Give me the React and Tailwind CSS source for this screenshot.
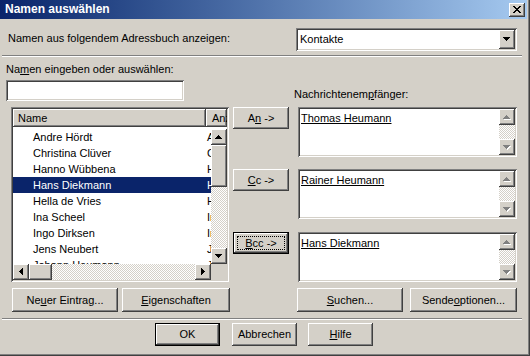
import React from 'react';

const raised =
  'bg-[#d4d0c8] shadow-[inset_-1px_-1px_#404040,inset_1px_1px_#ffffff,inset_-2px_-2px_#808080,inset_2px_2px_#d4d0c8]';
const sunken =
  'bg-white shadow-[inset_1px_1px_#808080,inset_-1px_-1px_#ffffff,inset_2px_2px_#404040,inset_-2px_-2px_#d4d0c8]';
const dither = 'bg-[repeating-conic-gradient(#ffffff_0%_25%,#d4d0c8_0%_50%)] bg-[length:2px_2px]';

const ARROWS = {
  up: { w: 7, h: 4, d: 'M3 0h1v1h-1zM2 1h3v1h-3zM1 2h5v1h-5zM0 3h7v1h-7z' },
  down: { w: 7, h: 4, d: 'M0 0h7v1h-7zM1 1h5v1h-5zM2 2h3v1h-3zM3 3h1v1h-1z' },
  left: { w: 4, h: 7, d: 'M3 0h1v7h-1zM2 1h1v5h-1zM1 2h1v3h-1zM0 3h1v1h-1z' },
  right: { w: 4, h: 7, d: 'M0 0h1v7h-1zM1 1h1v5h-1zM2 2h1v3h-1zM3 3h1v1h-1z' },
};

const Arrow = ({ dir, disabled }) => {
  const a = ARROWS[dir];
  return (
    <svg width={a.w + 1} height={a.h + 1} viewBox={`0 0 ${a.w + 1} ${a.h + 1}`} shapeRendering="crispEdges">
      {disabled && <path d={a.d} fill="#ffffff" transform="translate(1 1)" />}
      <path d={a.d} fill={disabled ? '#808080' : '#000000'} />
    </svg>
  );
};

const ScrollBtn = ({ dir, disabled }) => (
  <div className={`${raised} w-[16px] h-[16px] shrink-0 flex items-center justify-center`}>
    <Arrow dir={dir} disabled={disabled} />
  </div>
);

const Button = ({ children, className = '', isDefault, focused }) => (
  <div className={`${className} ${isDefault ? 'border border-black' : ''} shrink-0 flex`}>
    <div className={`${raised} flex-1 flex items-center justify-center p-[3px]`}>
      <div
        className={`flex-1 self-stretch flex items-center justify-center ${
          focused ? 'outline outline-1 outline-dotted outline-black -outline-offset-1' : ''
        }`}
      >
        {children}
      </div>
    </div>
  </div>
);

const RecipientBox = ({ name, className = '' }) => (
  <div className={`${sunken} ${className} w-[219px] h-[50px] flex p-[2px]`}>
    <div className="flex-1 pl-[1px] pt-[3px]">
      <span className="underline">{name}</span>
    </div>
    <div className="w-[16px] flex flex-col">
      <ScrollBtn dir="up" disabled />
      <div className={`flex-1 ${dither}`} />
      <ScrollBtn dir="down" disabled />
    </div>
  </div>
);

const contacts = [
  'Andre Hördt',
  'Christina Clüver',
  'Hanno Wübbena',
  'Hans Diekmann',
  'Hella de Vries',
  'Ina Scheel',
  'Ingo Dirksen',
  'Jens Neubert',
  'Johann Heumann',
];

const ContactList = () => (
  <div className={`${sunken} ml-[5px] mt-[6px] w-[218px] h-[175px] p-[2px] flex flex-col`}>
    <div className="h-[18px] flex shrink-0 overflow-hidden">
      <div className={`${raised} w-[193px] shrink-0 flex items-center pl-[5px]`}>Name</div>
      <div className={`${raised} w-[21px] shrink-0 flex items-center pl-[6px] overflow-hidden whitespace-nowrap`}>
        Anzeigename
      </div>
    </div>
    <div className="flex-1 flex overflow-hidden">
      <div className="w-[198px] pt-[2px] overflow-hidden">
        {contacts.map((c) => {
          const sel = c === 'Hans Diekmann';
          return (
            <div key={c} className={`h-[16px] flex items-center ${sel ? 'bg-[#0a246a] text-white' : ''}`}>
              <div className="w-[193px] pl-[20px] shrink-0 whitespace-nowrap">{c}</div>
              <div className="w-[5px] pl-[1px] overflow-hidden whitespace-nowrap">{c}</div>
            </div>
          );
        })}
      </div>
      <div className="w-[16px] flex flex-col pt-[2px]">
        <ScrollBtn dir="up" />
        <div className={`${raised} h-[42px] shrink-0`} />
        <div className={`flex-1 ${dither}`} />
        <ScrollBtn dir="down" />
      </div>
    </div>
    <div className="h-[16px] flex shrink-0">
      <div className="w-[198px] flex">
        <ScrollBtn dir="left" />
        <div className={`${raised} w-[23px] shrink-0`} />
        <div className={`flex-1 ${dither}`} />
        <ScrollBtn dir="right" />
      </div>
      <div className="w-[16px] bg-[#d4d0c8]" />
    </div>
  </div>
);

export default function App() {
  return (
    <div className="w-[530px] h-[356px] bg-[#d4d0c8] overflow-hidden flex flex-col text-[11px] leading-[13px] text-black font-['Liberation_Sans',Arial,sans-serif] shadow-[inset_-1px_-1px_#404040,inset_-2px_-2px_#808080]">
      {/* title bar */}
      <div className="h-[19px] w-[527px] shrink-0 flex items-center pl-[5px] bg-linear-to-r from-[#0a246a] to-[#a6caf0]">
        <span className="text-white font-bold text-[12px]">Namen auswählen</span>
        <div className={`${raised} ml-auto mr-[2px] w-[16px] h-[14px] flex items-center justify-center`}>
          <svg width="8" height="7" viewBox="0 0 8 7" shapeRendering="crispEdges">
            <path
              d="M0 0h2v1h-2zM6 0h2v1h-2zM1 1h2v1h-2zM5 1h2v1h-2zM2 2h4v1h-4zM3 3h2v1h-2zM2 4h4v1h-4zM1 5h2v1h-2zM5 5h2v1h-2zM0 6h2v1h-2zM6 6h2v1h-2z"
              fill="#000"
            />
          </svg>
        </div>
      </div>

      {/* address book row */}
      <div className="mt-[9px] h-[23px] flex items-center shrink-0">
        <span className="pl-[8px] pb-[2px]">Namen aus folgendem Adressbuch anzeigen:</span>
        <div className={`${sunken} ml-auto mr-[13px] w-[221px] h-[23px] flex items-center p-[2px]`}>
          <span className="flex-1 pl-[2px]">Kontakte</span>
          <div className={`${raised} w-[16px] h-[19px] flex items-center justify-center`}>
            <Arrow dir="down" />
          </div>
        </div>
      </div>

      <div className="mt-[4px] ml-[2px] mr-[8px] h-[2px] border-t border-[#808080] border-b border-b-white shrink-0" />

      {/* main area */}
      <div className="flex shrink-0">
        <div className="ml-[6px] w-[224px] flex flex-col">
          <div className="mt-[6px] h-[13px]">
            Na<u>m</u>en eingeben oder auswählen:
          </div>
          <div className={`${sunken} mt-[4px] w-[178px] h-[21px]`} />
          <ContactList />
          <div className="mt-[6px] flex">
            <Button className="ml-[6px] w-[106px] h-[24px]">
              <span>
                Ne<u>u</u>er Eintrag...
              </span>
            </Button>
            <Button className="ml-[4px] w-[108px] h-[24px]">
              <span>
                <u>E</u>igenschaften
              </span>
            </Button>
          </div>
        </div>

        <div className="ml-[3px] w-[56px] flex flex-col pt-[50px]">
          <Button className="w-[56px] h-[22px]">
            <span>
              A<u>n</u> -&gt;
            </span>
          </Button>
          <Button className="mt-[40px] w-[56px] h-[22px]">
            <span>
              <u>C</u>c -&gt;
            </span>
          </Button>
          <Button className="mt-[41px] w-[56px] h-[22px]" isDefault focused>
            <span>
              <u>B</u>cc -&gt;
            </span>
          </Button>
        </div>

        <div className="ml-[5px] w-[223px] flex flex-col">
          <div className="mt-[31px] h-[13px]">
            Nachrichtenem<u>p</u>fänger:
          </div>
          <RecipientBox className="mt-[6px] ml-[4px]" name="Thomas Heumann" />
          <RecipientBox className="mt-[12px] ml-[4px]" name="Rainer Heumann" />
          <RecipientBox className="mt-[13px] ml-[4px]" name="Hans Diekmann" />
          <div className="mt-[6px] flex">
            <Button className="ml-[3px] w-[106px] h-[24px]">
              <span>
                <u>S</u>uchen...
              </span>
            </Button>
            <Button className="ml-[7px] w-[107px] h-[24px]">
              <span>
                Sende<u>o</u>ptionen...
              </span>
            </Button>
          </div>
        </div>
      </div>

      <div className="mt-[6px] ml-[2px] mr-[8px] h-[2px] border-t border-[#808080] border-b border-b-white shrink-0" />

      <div className="mt-[3px] flex shrink-0">
        <Button className="ml-[155px] w-[65px] h-[23px]" isDefault>
          <span>OK</span>
        </Button>
        <Button className="ml-[12px] w-[65px] h-[23px]">
          <span>Abbrechen</span>
        </Button>
        <Button className="ml-[11px] w-[65px] h-[23px]">
          <span>
            <u>H</u>ilfe
          </span>
        </Button>
      </div>
    </div>
  );
}
